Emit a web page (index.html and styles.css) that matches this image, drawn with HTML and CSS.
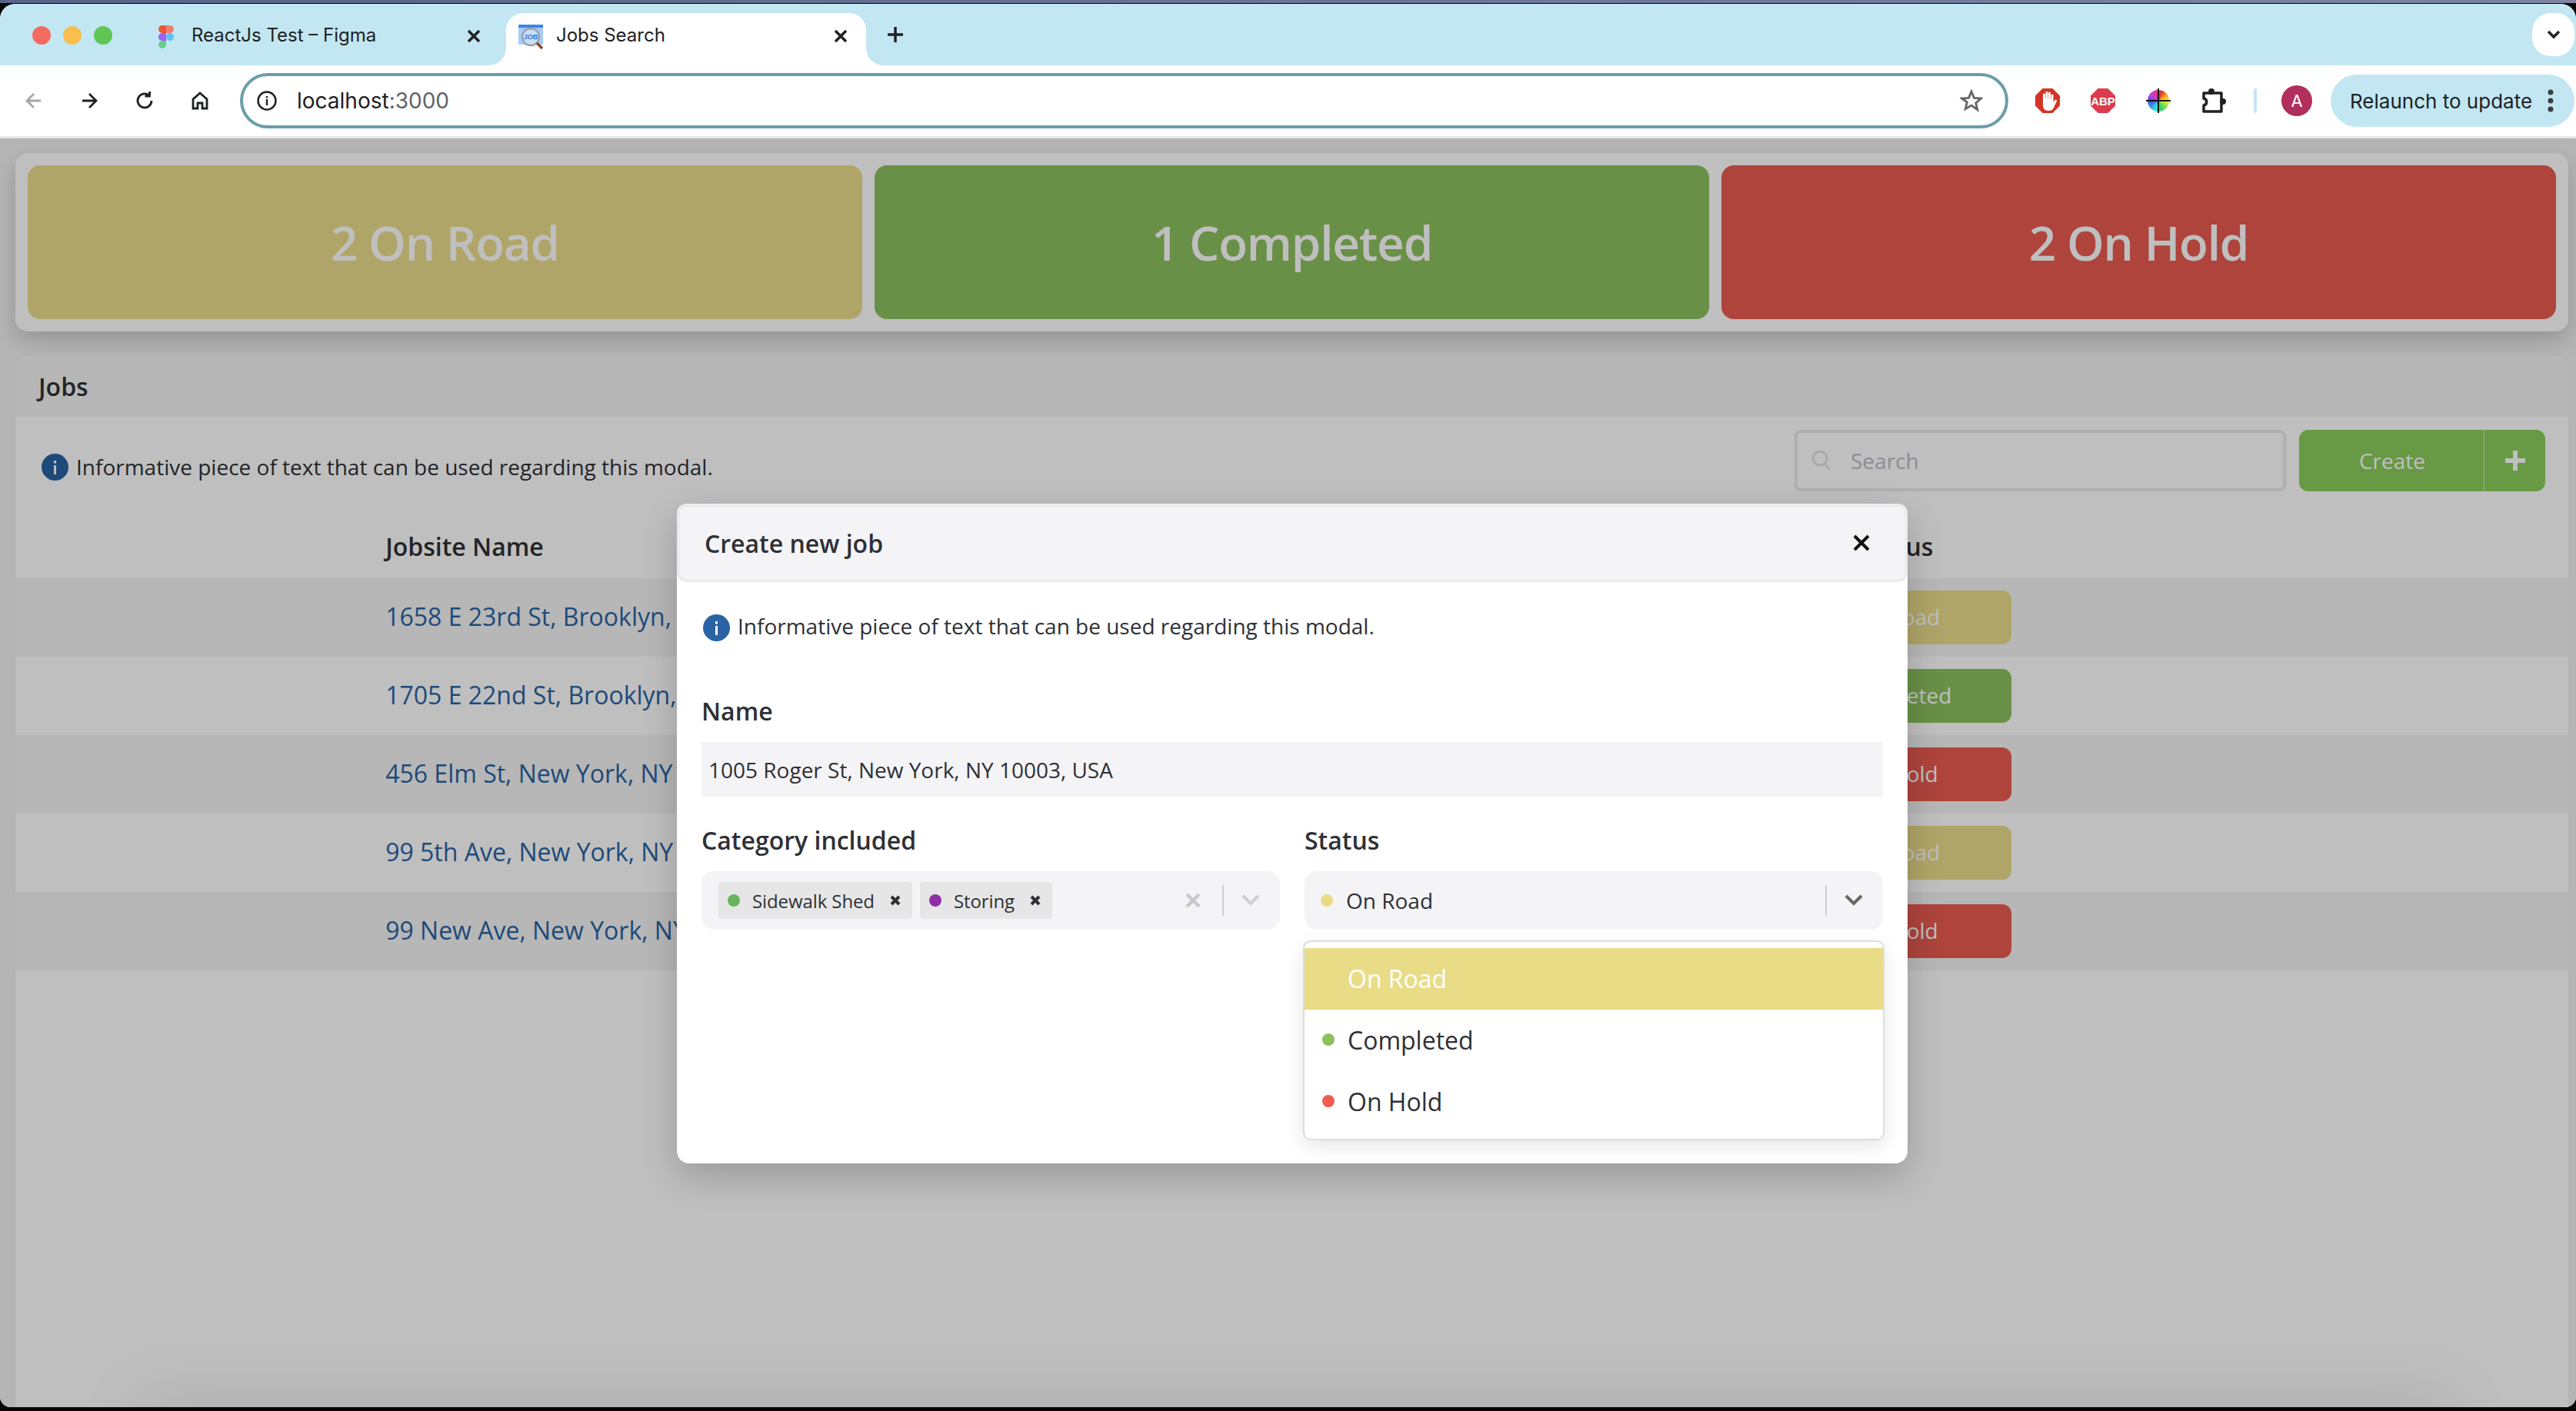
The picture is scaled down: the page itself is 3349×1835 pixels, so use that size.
FILE: index.html
```html
<!DOCTYPE html>
<html lang="en">
<head>
    <meta charset="UTF-8">
    <title>Jobs Search</title>
    <link rel="stylesheet" href="styles.css">
</head>
<body>
    <div class="desk-strip"></div>
    <div class="window">
        <div class="tabbar">
            <div class="lights">
                <span class="light light-red"></span>
                <span class="light light-yellow"></span>
                <span class="light light-green"></span>
            </div>
            <div class="tab tab-idle">
                <svg class="tab-figma" width="20" height="30" viewBox="0 0 20 30">
                    <path fill="#e85a33" d="M5 0h5v10H5a5 5 0 0 1 0-10z"/>
                    <path fill="#f47c6c" d="M10 0h5a5 5 0 0 1 0 10h-5z"/>
                    <path fill="#9d62f5" d="M5 10h5v10H5a5 5 0 0 1 0-10z"/>
                    <circle fill="#5fbdfb" cx="15" cy="15" r="5"/>
                    <path fill="#62cd8e" d="M5 20h5v5a5 5 0 1 1-5-5z"/>
                </svg>
                <span class="tab-title">ReactJs Test – Figma</span>
                <svg class="tab-close" width="24" height="24" viewBox="0 0 24 24"><path d="M5 5l14 14M19 5L5 19"/></svg>
            </div>
            <div class="tab tab-active">
                <svg class="tab-favicon" width="33" height="32" viewBox="0 0 33 32">
                    <rect x="0" y="0" width="32" height="26" fill="#a8ccf6"/>
                    <rect x="0" y="0" width="32" height="4" fill="#3f83ea"/>
                    <circle cx="16" cy="16" r="11" fill="#c9def8" stroke="#9aa3ad" stroke-width="2.5"/>
                    <text class="job-mark" x="16" y="19">JOB</text>
                    <path d="M24 24l7 7" stroke="#8a4a2c" stroke-width="3.5" fill="none"/>
                </svg>
                <span class="tab-title">Jobs Search</span>
                <svg class="tab-close" width="24" height="24" viewBox="0 0 24 24"><path d="M5 5l14 14M19 5L5 19"/></svg>
            </div>
            <svg class="new-tab" width="24" height="24" viewBox="0 0 24 24"><path d="M12 2v20M2 12h20"/></svg>
            <div class="tab-list">
                <svg width="20" height="14" viewBox="0 0 20 14"><path d="M3 3l7 7 7-7"/></svg>
            </div>
        </div>

        <div class="toolbar">
            <svg class="tool tool-off" viewBox="0 0 24 24"><path d="M21 12H4M12 3l-9 9 9 9"/></svg>
            <svg class="tool" viewBox="0 0 24 24"><path d="M3 12h17M12 3l9 9-9 9"/></svg>
            <svg class="tool" viewBox="0 0 24 24"><path d="M21 12a9 9 0 1 1-3.200-6.900M18.500 0v6h-6"/></svg>
            <svg class="tool" viewBox="0 0 24 24"><path d="M12 2L3 10v12h6v-7h6v7h6V10z"/></svg>
            <div class="omnibox">
                <svg class="omni-info" width="26" height="26" viewBox="0 0 26 26">
                    <circle cx="13" cy="13" r="11.500" fill="none" stroke="#202124" stroke-width="2.500"/>
                    <rect x="11.800" y="11" width="2.400" height="8" fill="#202124"/>
                    <rect x="11.800" y="7" width="2.400" height="2.500" fill="#202124"/>
                </svg>
                <span class="omni-host">localhost<span class="omni-port">:3000</span></span>
                <svg class="omni-star" width="30" height="30" viewBox="0 0 30 30"><path d="M15 3l3.500 8.300 9 .7-6.800 5.900 2.100 8.800L15 21.100l-7.800 4.600 2.100-8.800L2.500 12l9-.7z"/></svg>
            </div>
            <div class="extensions">
                <svg width="32" height="32" viewBox="0 0 32 32">
                    <path fill="#d43325" d="M9.500 0h13L32 9.500v13L22.500 32h-13L0 22.500v-13z"/>
                    <path fill="#fff" d="M10 8a1.500 1.500 0 0 1 3 0v5h.500V5.500a1.500 1.500 0 0 1 3 0V13h.500V6a1.500 1.500 0 0 1 3 0v8h.500V9a1.500 1.500 0 0 1 3 0v9l2-3a1.500 1.500 0 0 1 2.500 1.500L24 25c-1.500 3-3.500 4-6.500 4-4.500 0-7.500-2-7.500-7z"/>
                </svg>
                <svg width="32" height="32" viewBox="0 0 32 32">
                    <path fill="#dd3b4f" d="M9.500 0h13L32 9.500v13L22.500 32h-13L0 22.500v-13z"/>
                    <text class="abp-mark" x="16" y="21.500">ABP</text>
                </svg>
                <div class="picker-wrap">
                    <span class="picker"></span>
                    <span class="picker-h"></span>
                    <span class="picker-v"></span>
                </div>
                <svg width="32" height="32" viewBox="0 0 32 32">
                    <circle cx="13" cy="4" r="4" fill="#202124"/>
                    <circle cx="28" cy="17" r="4" fill="#202124"/>
                    <path fill="none" stroke="#202124" stroke-width="3.500" stroke-linejoin="round" d="M3 6H26V30H3V22C8 21 8 14 3 13Z"/>
                </svg>
            </div>
            <span class="tool-divider"></span>
            <span class="avatar">A</span>
            <div class="relaunch">
                <span>Relaunch to update</span>
                <svg width="8" height="30" viewBox="0 0 8 30"><circle cx="4" cy="4" r="3.500"/><circle cx="4" cy="15" r="3.500"/><circle cx="4" cy="26" r="3.500"/></svg>
            </div>
        </div>

        <div class="content">
            <main class="page">
                <section class="summary">
                    <div class="summary-card bg-road">2 On Road</div>
                    <div class="summary-card bg-done">1 Completed</div>
                    <div class="summary-card bg-hold">2 On Hold</div>
                </section>

                <section class="jobs">
                    <h2 class="jobs-title">Jobs</h2>
                    <div class="jobs-tools">
                        <p class="info-line info-page">
                            <svg class="info-icon" viewBox="0 0 35 35"><circle cx="17.500" cy="17.500" r="17.500"/><rect x="16" y="15" width="3" height="12" fill="#fff"/><rect x="16" y="9" width="3" height="3.500" fill="#fff"/></svg>
                            Informative piece of text that can be used regarding this modal.
                        </p>
                        <div class="search">
                            <svg width="26" height="28" viewBox="0 0 26 28"><circle cx="11" cy="11" r="9"/><path d="M17.500 18l6 8"/></svg>
                            <span>Search</span>
                        </div>
                        <div class="create">
                            <span class="create-label">Create</span>
                            <span class="create-plus">
                                <svg width="28" height="28" viewBox="0 0 28 28"><path d="M14 1v26M1 14h26"/></svg>
                            </span>
                        </div>
                    </div>
                    <table class="jobs-table">
                        <thead>
                            <tr>
                                <th class="col-lead"></th>
                                <th class="col-name">Jobsite Name</th>
                                <th class="col-status">Status</th>
                                <th class="col-rest"></th>
                            </tr>
                        </thead>
                        <tbody>
                            <tr>
                                <td></td>
                                <td><a class="job-link">1658 E 23rd St, Brooklyn,</a></td>
                                <td><span class="badge bg-road">On Road</span></td>
                                <td></td>
                            </tr>
                            <tr>
                                <td></td>
                                <td><a class="job-link">1705 E 22nd St, Brooklyn,</a></td>
                                <td><span class="badge bg-done">Completed</span></td>
                                <td></td>
                            </tr>
                            <tr>
                                <td></td>
                                <td><a class="job-link">456 Elm St, New York, NY</a></td>
                                <td><span class="badge bg-hold">On Hold</span></td>
                                <td></td>
                            </tr>
                            <tr>
                                <td></td>
                                <td><a class="job-link">99 5th Ave, New York, NY</a></td>
                                <td><span class="badge bg-road">On Road</span></td>
                                <td></td>
                            </tr>
                            <tr>
                                <td></td>
                                <td><a class="job-link">99 New Ave, New York, NY</a></td>
                                <td><span class="badge bg-hold">On Hold</span></td>
                                <td></td>
                            </tr>
                        </tbody>
                    </table>
                </section>
                <div class="bottom-sheet"></div>
            </main>

            <div class="overlay">
                <div class="modal">
                    <div class="modal-head">
                        <h3 class="modal-title">Create new job</h3>
                        <svg class="modal-close" width="24" height="24" viewBox="0 0 24 24"><path d="M3 3l18 18M21 3L3 21"/></svg>
                    </div>
                    <div class="modal-body">
                        <p class="info-line info-modal">
                            <svg class="info-icon" viewBox="0 0 35 35"><circle cx="17.500" cy="17.500" r="17.500"/><rect x="16" y="15" width="3" height="12" fill="#fff"/><rect x="16" y="9" width="3" height="3.500" fill="#fff"/></svg>
                            <span class="info-text">Informative piece of text that can be used regarding this modal.</span>
                        </p>

                        <label class="field-label label-name">Name</label>
                        <div class="text-input">1005 Roger St, New York, NY 10003, USA</div>

                        <div class="field-grid">
                            <div class="field">
                                <label class="field-label">Category included</label>
                                <div class="select">
                                    <div class="chip">
                                        <span class="dot dot-green"></span>
                                        <span class="chip-text">Sidewalk Shed</span>
                                        <svg class="chip-x" viewBox="0 0 14 14"><path d="M2 2l10 10M12 2L2 12"/></svg>
                                    </div>
                                    <div class="chip">
                                        <span class="dot dot-purple"></span>
                                        <span class="chip-text">Storing</span>
                                        <svg class="chip-x" viewBox="0 0 14 14"><path d="M2 2l10 10M12 2L2 12"/></svg>
                                    </div>
                                    <svg class="select-clear" viewBox="0 0 20 20"><path d="M2 2l16 16M18 2L2 18"/></svg>
                                    <span class="select-divider"></span>
                                    <svg class="select-arrow arrow-off" viewBox="0 0 24 16"><path d="M2 2l10 10L22 2"/></svg>
                                </div>
                            </div>
                            <div class="field">
                                <label class="field-label">Status</label>
                                <div class="select select-status">
                                    <span class="dot dot-yellow"></span>
                                    <span class="select-value">On Road</span>
                                    <span class="select-divider divider-end"></span>
                                    <svg class="select-arrow" viewBox="0 0 24 16"><path d="M2 2l10 10L22 2"/></svg>
                                    <ul class="menu">
                                        <li class="menu-item menu-current"><span class="dot dot-yellow"></span>On Road</li>
                                        <li class="menu-item"><span class="dot dot-lime"></span>Completed</li>
                                        <li class="menu-item"><span class="dot dot-red"></span>On Hold</li>
                                    </ul>
                                </div>
                            </div>
                        </div>
                    </div>
                </div>
            </div>
        </div>
    </div>
</body>
</html>
```

FILE: styles.css
```css
* {
    box-sizing: border-box;
}
html, body {
    margin: 0;
    height: 100%;
}
body {
    width: 3349px;
    height: 1835px;
    overflow: hidden;
    background-color: #060606;
    font-family: "Open Sans", "Noto Sans", sans-serif;
    color: #2e3036;
}
h2, h3, p, ul {
    margin: 0;
    padding: 0;
}

/* browser frame */
.desk-strip {
    height: 4px;
    background: linear-gradient(90deg, #566387, #7d83a0);
}
.window {
    height: 1825px;
    margin-top: 1px;
    border-radius: 20px 20px 14px 14px;
    overflow: hidden;
    display: flex;
    flex-direction: column;
    background-color: #fff;
}
.tabbar {
    flex: none;
    height: 80px;
    display: flex;
    align-items: flex-start;
    background-color: #c2e7f3;
    font-family: Inter, "Liberation Sans", sans-serif;
    color: #202124;
}
.lights {
    display: flex;
    gap: 16px;
    margin: 29px 0 0 42px;
}
.light {
    width: 24px;
    height: 24px;
    border-radius: 50%;
}
.light-red { background-color: #f46b60; }
.light-yellow { background-color: #f8be4e; }
.light-green { background-color: #60c653; }
.tab {
    position: relative;
    width: 468px;
    height: 68px;
    margin-top: 12px;
    display: flex;
    align-items: center;
    padding: 0 21px 0 16px;
    font-size: 24px;
}
.tab-idle {
    margin-left: 44px;
    padding-right: 30px;
}
.tab-active {
    background-color: #fff;
    border-radius: 22px 22px 0 0;
}
.tab-active::before,
.tab-active::after {
    content: "";
    position: absolute;
    bottom: 0;
    width: 22px;
    height: 22px;
}
.tab-active::before {
    left: -22px;
    background: radial-gradient(circle at 0 0, transparent 21.500px, #fff 22px);
}
.tab-active::after {
    right: -22px;
    background: radial-gradient(circle at 100% 0, transparent 21.500px, #fff 22px);
}
.tab-figma {
    margin-right: 23px;
    margin-top: -6px;
}
.tab-favicon {
    margin-right: 16px;
    margin-top: -6px;
}
.job-mark {
    font: 700 9px "Liberation Sans", sans-serif;
    fill: #2f74e0;
    text-anchor: middle;
}
.tab-title {
    flex: 1;
    margin-top: -11px;
}
.tab-close {
    margin-top: -9px;
}
.tab-close path,
.new-tab path,
.tab-list path {
    fill: none;
    stroke: #202124;
    stroke-width: 3.500;
}
.new-tab {
    margin: 28px 0 0 26px;
}
.tab-list {
    width: 55px;
    height: 56px;
    margin: 12px 2px 0 auto;
    background-color: #fff;
    border-radius: 24px;
    display: flex;
    align-items: center;
    justify-content: center;
}
.toolbar {
    flex: none;
    height: 92px;
    display: flex;
    align-items: center;
    padding-left: 32px;
    background-color: #fff;
    border-radius: 16px 0 0 0;
    font-family: Inter, "Liberation Sans", sans-serif;
    color: #202124;
}
.tool {
    width: 24px;
    height: 24px;
    flex: none;
    margin-right: 48px;
    fill: none;
    stroke: #202124;
    stroke-width: 2.800;
    overflow: visible;
}
.tool-off {
    stroke: #a6a6a6;
}
.tool:nth-child(4) {
    margin-right: 40px;
}
.omnibox {
    flex: none;
    width: 2299px;
    height: 72px;
    display: flex;
    align-items: center;
    padding: 0 29px 0 18px;
    border: 4px solid #6a9ea8;
    border-radius: 36px;
    font-size: 28px;
}
.omni-host {
    flex: 1;
    margin-left: 26px;
}
.omni-port {
    color: #5f6368;
}
.omni-star path {
    fill: none;
    stroke: #666;
    stroke-width: 2.800;
}
.extensions {
    display: flex;
    align-items: center;
    gap: 40px;
    margin-left: 35px;
}
.abp-mark {
    font: 700 15px "Liberation Sans", sans-serif;
    fill: #fff;
    text-anchor: middle;
}
.picker-wrap {
    position: relative;
    width: 32px;
    height: 32px;
}
.picker {
    position: absolute;
    inset: 2px;
    border-radius: 50%;
    background: conic-gradient(#d83b2d, #ff9f1a, #f6ee3d, #7be04a, #2bd16c, #39e0d8, #2f8fe8, #5b4be0, #c33be0, #e0358a, #d83b2d);
    transform: rotate(20deg);
}
.picker-h {
    position: absolute;
    left: 0;
    right: 0;
    top: 15px;
    height: 2px;
    background-color: #111;
}
.picker-v {
    position: absolute;
    top: 0;
    bottom: 0;
    left: 15px;
    width: 2px;
    background-color: #111;
}
.tool-divider {
    width: 4px;
    height: 32px;
    margin-left: 36px;
    background-color: #c2e7f3;
    border-radius: 2px;
}
.avatar {
    width: 40px;
    height: 40px;
    margin-left: 32px;
    border-radius: 50%;
    background-color: #b12f5c;
    color: #fff;
    font-size: 22px;
    display: flex;
    align-items: center;
    justify-content: center;
}
.relaunch {
    width: 317px;
    height: 68px;
    margin-left: 24px;
    padding: 0 27px 0 25px;
    border-radius: 34px;
    background-color: #c2e7f3;
    display: flex;
    align-items: center;
    justify-content: space-between;
    font-size: 26px;
    white-space: nowrap;
}
.relaunch svg {
    fill: #3a3c40;
}

/* page under the modal */
.content {
    position: relative;
    flex: 1;
    overflow: hidden;
    border-top: 3px solid #e8e8e8;
}
.page {
    height: 100%;
    padding: 19px 10px 0 20px;
    background-color: #f1f2f1;
}
.summary {
    display: flex;
    gap: 16px;
    padding: 16px;
    background-color: #fff;
    border-radius: 16px;
    box-shadow: 0 12px 30px rgba(0, 0, 0, 0.18);
}
.summary-card {
    flex: 1;
    height: 200px;
    border-radius: 16px;
    display: flex;
    align-items: center;
    justify-content: center;
    color: #fff;
    font-size: 62px;
    font-weight: 600;
    letter-spacing: -1.200px;
}
.bg-road { background-color: #ebdd8b; }
.bg-done { background-color: #8dc05f; }
.bg-hold { background-color: #e85b50; }
.jobs {
    position: relative;
    z-index: 1;
    height: 1400px;
    margin-top: 32px;
    background-color: #fff;
    border-radius: 16px 16px 0 0;
}
.jobs-title {
    height: 79px;
    padding: 0 30px;
    display: flex;
    align-items: center;
    background-color: #f5f5f5;
    border-radius: 16px 16px 0 0;
    font-size: 32px;
    font-weight: 600;
}
.jobs-tools {
    display: flex;
    align-items: center;
    padding: 17px 30px 0 34px;
}
.info-line {
    display: flex;
    align-items: center;
    gap: 10px;
    font-size: 28px;
}
.info-page {
    flex: 1;
    margin-top: 16px;
}
.info-icon {
    width: 35px;
    height: 35px;
    flex: none;
    fill: #2963a3;
}
.search {
    width: 639px;
    height: 80px;
    display: flex;
    align-items: center;
    gap: 25px;
    padding-left: 18px;
    border: 4px solid #ebebeb;
    border-radius: 8px;
    color: #b9bdc5;
    font-size: 28px;
}
.search svg {
    fill: none;
    stroke: #dedede;
    stroke-width: 2.500;
}
.create {
    width: 320px;
    height: 80px;
    margin-left: 17px;
    display: flex;
    background-color: #8bcd5c;
    border-radius: 12px;
    color: #fff;
    font-size: 28px;
}
.create-label {
    flex: 1;
    display: flex;
    align-items: center;
    justify-content: center;
    padding-left: 2px;
}
.create-plus {
    width: 80px;
    display: flex;
    align-items: center;
    justify-content: center;
    border-left: 1px solid #d4ecbf;
}
.create-plus path {
    stroke: #fff;
    stroke-width: 6;
}
.jobs-table {
    width: 100%;
    table-layout: fixed;
    border-collapse: collapse;
    font-size: 32px;
}
.jobs-table th {
    height: 113px;
    padding: 0 0 21px;
    vertical-align: bottom;
    text-align: left;
    font-weight: 600;
    line-height: 40px;
    color: #2e3036;
}
.col-lead { width: 481px; }
.col-name { width: 1819px; }
.jobs-table .col-status {
    width: 294px;
    padding-right: 6px;
    text-align: center;
}
.col-rest { width: 724px; }
.jobs-table td {
    height: 102px;
    padding: 0;
}
.jobs-table tbody tr:nth-child(odd) {
    background-color: #f5f5f5;
}
.job-link {
    display: block;
    margin-top: -3px;
    color: #2963a3;
    white-space: nowrap;
}
.badge {
    height: 70px;
    display: flex;
    align-items: center;
    justify-content: center;
    padding: 0 4px 3px 0;
    border-radius: 12px;
    color: #fff;
    font-size: 28px;
}
.bottom-sheet {
    position: absolute;
    left: 180px;
    right: 160px;
    bottom: -40px;
    z-index: 2;
    height: 40px;
    box-shadow: 0 0 90px 0 rgba(0, 0, 0, 0.16);
}

/* modal */
.overlay {
    position: absolute;
    inset: 0;
    z-index: 5;
    padding: 475px 0 0 880px;
    background-color: rgba(0, 0, 0, 0.25);
}
.modal {
    width: 1600px;
    height: 858px;
    background-color: #fff;
    border-radius: 16px;
    box-shadow: 0 16px 48px rgba(0, 0, 0, 0.2);
}
.modal-head {
    height: 102px;
    display: flex;
    align-items: center;
    justify-content: space-between;
    padding: 0 44px 0 32px;
    background-color: #f4f4f6;
    border: 4px solid #ececee;
    border-radius: 12px;
}
.modal-title {
    font-size: 32px;
    font-weight: 600;
}
.modal-close path {
    fill: none;
    stroke: #111;
    stroke-width: 4;
}
.modal-body {
    padding: 42px 32px 0;
}
.info-modal {
    padding-left: 2px;
    height: 35px;
}
.info-text {
    margin-top: -5px;
}
.field-label {
    display: block;
    height: 40px;
    margin-bottom: 20px;
    font-size: 32px;
    font-weight: 600;
    line-height: 40px;
}
.label-name {
    margin-top: 71px;
}
.text-input {
    height: 71px;
    padding-left: 9px;
    display: flex;
    align-items: center;
    background-color: #f4f4f6;
    font-size: 28px;
}
.field-grid {
    display: grid;
    grid-template-columns: 1fr 1fr;
    gap: 32px;
    margin-top: 37px;
}
.select {
    position: relative;
    height: 76px;
    display: flex;
    align-items: center;
    padding: 0 26px 0 22px;
    background-color: #f4f4f6;
    border-radius: 16px;
}
.chip {
    height: 48px;
    display: flex;
    align-items: center;
    gap: 16px;
    margin-right: 10px;
    padding: 0 15px 0 12px;
    background-color: #e6e6e6;
    border-radius: 4px;
    font-size: 24px;
    letter-spacing: -0.100px;
}
.chip-x {
    width: 14px;
    height: 14px;
    margin-left: 4px;
}
.chip-x path {
    fill: none;
    stroke: #2e3036;
    stroke-width: 4;
}
.dot {
    flex: none;
    width: 16px;
    height: 16px;
    border-radius: 50%;
}
.dot-green { background-color: #69b35f; }
.dot-purple { background-color: #8e2fa8; }
.dot-yellow { background-color: #e9dc87; }
.dot-lime { background-color: #8cc05c; }
.dot-red { background-color: #f25c50; }
.select-clear {
    width: 20px;
    height: 20px;
    margin-left: auto;
}
.select-clear path {
    fill: none;
    stroke: #c9c9cb;
    stroke-width: 4.500;
}
.select-divider {
    width: 2px;
    height: 40px;
    margin: 0 23px 0 28px;
    background-color: #cfcfd1;
}
.select .divider-end {
    margin: 0 23px 0 auto;
}
.select-arrow {
    width: 24px;
    height: 16px;
}
.select-arrow path {
    fill: none;
    stroke: #666;
    stroke-width: 4;
}
.arrow-off path {
    stroke: #cfcfd1;
}
.select-status {
    padding-left: 21px;
}
.select-value {
    margin-left: 17px;
    font-size: 28px;
}
.menu {
    position: absolute;
    top: 90px;
    left: -2px;
    right: -2px;
    z-index: 2;
    height: 260px;
    padding: 8px 0;
    list-style: none;
    background-color: #fff;
    border: 2px solid #dddddd;
    border-radius: 10px;
    box-shadow: 0 8px 24px rgba(0, 0, 0, 0.1);
}
.menu-item {
    height: 80px;
    display: flex;
    align-items: center;
    gap: 17px;
    padding: 0 0 2px 23px;
    font-size: 32px;
}
.menu-current {
    background-color: #e9dc87;
    color: #fff;
}
```
